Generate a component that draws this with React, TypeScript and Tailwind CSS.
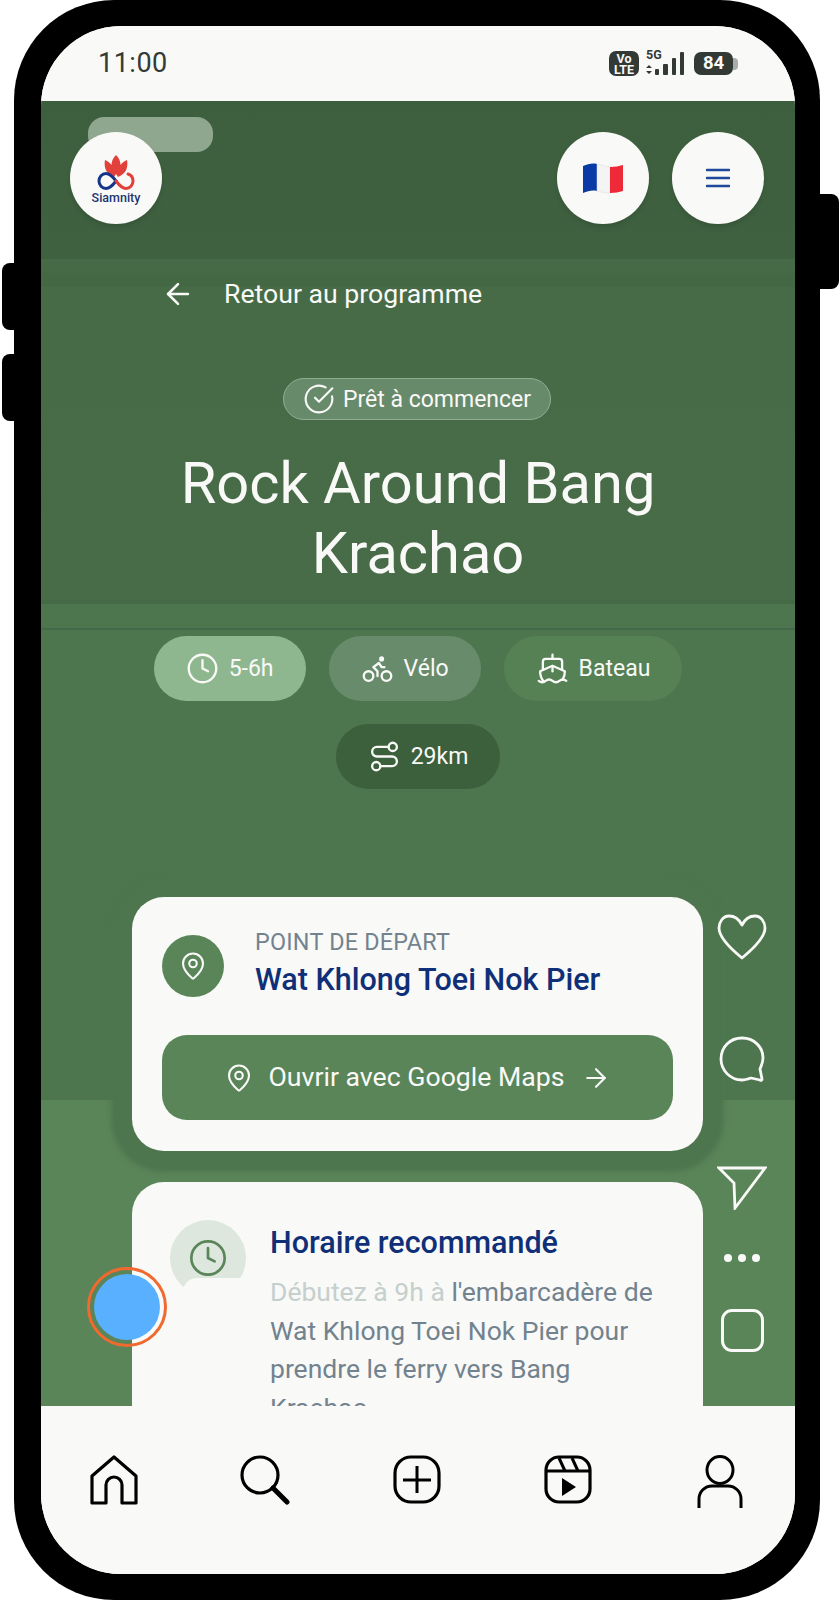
import React from 'react';
import { ArrowLeft, ArrowRight, Bike, CircleCheckBig, Clock, MapPin, Route, Ship } from 'lucide-react';

const SiamnityLogo = () => (
  <div className="flex flex-col items-center pt-[3px]">
    <svg width="38" height="36" viewBox="0 0 38 36" fill="none">
      <path d="M19 0c3 3 4.500 6 4.500 10 1.500-2 3.500-4 6.500-5 1 5 0 10-3 13-2 2-4 3-6 4l-2-3-2 3c-2-1-4-2-6-4-3-3-4-8-3-13 3 1 5 3 6.500 5C14.500 6 16 3 19 0z" fill="#e2403a" />
      <path d="M19 26c-3-4-6-7.500-10-7.500-4 0-7 3.300-7 7.500s3 7.500 7 7.500c4 0 7-3.500 10-7.500z" stroke="#15358a" strokeWidth="3" />
      <path d="M19 26c3 4 6 7.500 10 7.500 4 0 7-3.300 7-7.500 0-3-2-6-5-7" stroke="#e2403a" strokeWidth="3" strokeLinecap="round" />
    </svg>
    <span className="text-[12.500px] leading-[14px] font-medium text-[#1c3570]">Siamnity</span>
  </div>
);

const FrenchFlag = () => (
  <svg width="42" height="32" viewBox="0 0 42 32">
    <path d="M1 4c5-2 9-3 14-2v27c-5-1-9 0-14 2z" fill="#0a3aa5" />
    <path d="M15 2c4 1 8 2 13 3v26c-5 0-9-1-13-2z" fill="#f4f4f4" stroke="#dcdcdc" strokeWidth="0.5" />
    <path d="M28 5c5 0 9-1 13-2v26c-4 1-8 2-13 2z" fill="#ee2a38" />
  </svg>
);

const pills = [
  { label: '5-6h', icon: Clock, className: 'bg-[#8fb78f]' },
  { label: 'Vélo', icon: Bike, className: 'bg-[#688b6c]' },
  { label: 'Bateau', icon: Ship, className: 'bg-[#558155]' },
  { label: '29km', icon: Route, className: 'bg-[#3c5f3c]' },
];

const StatusBar = () => (
  <div className="h-[75px] shrink-0 flex items-center justify-between pl-[57px] pr-[57px] bg-[#f9f9f7] text-[#333a36]">
    <span className="text-[27px] leading-none tracking-[0.5px]">11:00</span>
    <div className="flex items-center">
      <div className="w-[30px] h-[25px] rounded-[7px] bg-[#333a36] flex flex-col items-center justify-center text-[#f9f9f7] font-bold text-[12.500px] leading-[11px]">
        <span>Vo</span>
        <span>LTE</span>
      </div>
      <div className="ml-[7px] relative w-[40px] h-[24px]">
        <span className="absolute left-0 -top-[3px] text-[12.500px] leading-[12px] font-bold">5G</span>
        <svg className="absolute left-0 top-0" width="40" height="24" viewBox="0 0 40 24" fill="#333a36">
          <path d="M0 16l3-3 3 3zM0 19h6l-3 3z" />
          <rect x="9" y="17" width="4" height="6" rx="1" />
          <rect x="17" y="12" width="5" height="11" rx="1" />
          <rect x="26" y="6" width="4" height="17" rx="1" />
          <rect x="34" y="0" width="4" height="23" rx="1" />
        </svg>
      </div>
      <div className="ml-[8px] w-[39px] h-[23px] rounded-[7px] bg-[#333a36] text-[#f9f9f7] font-bold text-[18.500px] leading-[23px] text-center">84</div>
      <div className="w-[5px] h-[12px] rounded-r-[4px] bg-[#a9adab]" />
    </div>
  </div>
);

const SideActions = () => (
  <div className="absolute left-[676px] top-[813px] w-[50px] flex flex-col items-center text-[#f9f9f7]">
    <svg width="50" height="46" viewBox="0 0 50 46" fill="none" stroke="currentColor" strokeWidth="2.8" strokeLinejoin="round">
      <path d="M25 11C22 5 17 2 12 2 6 2 2 8 2 14c0 10 12 21 23 30 11-9 23-20 23-30 0-6-4-12-10-12-5 0-10 3-13 9z" />
    </svg>
    <svg className="mt-[76px]" width="46" height="46" viewBox="0 0 46 46" fill="none" stroke="currentColor" strokeWidth="2.8" strokeLinejoin="round">
      <path d="M23 2c12 0 21 9 21 20 0 5-2 8-3 11l2 10c0 1-1 2-2 1l-9-2c-3 1-6 2-9 2C11 44 2 34 2 23 2 11 11 2 23 2z" />
    </svg>
    <svg className="mt-[84px]" width="50" height="44" viewBox="0 0 50 44" fill="none" stroke="currentColor" strokeWidth="2.8" strokeLinejoin="miter">
      <path d="M2 2h46L18 42 17 17z" />
    </svg>
    <div className="mt-[44px] flex gap-[6px]">
      <span className="w-[8px] h-[8px] rounded-full bg-[#f9f9f7]" />
      <span className="w-[8px] h-[8px] rounded-full bg-[#f9f9f7]" />
      <span className="w-[8px] h-[8px] rounded-full bg-[#f9f9f7]" />
    </div>
    <div className="mt-[47px] w-[43px] h-[43px] rounded-[11px] border-[3px] border-[#f9f9f7]" />
  </div>
);

const BottomNav = () => (
  <div className="h-[168px] shrink-0 bg-[#f9f9f7] grid grid-cols-[repeat(5,151.500px)] -ml-[3px] pt-[49px] justify-items-center items-start">
    <svg width="50" height="50" viewBox="0 0 50 50" fill="none" stroke="#000" strokeWidth="3.2" strokeLinejoin="round">
      <path d="M3 48V21L25 2l22 19v27H33V30a8 8 0 0 0-16 0v18z" />
    </svg>
    <svg width="50" height="50" viewBox="0 0 50 50" fill="none" stroke="#000" strokeWidth="3.2" strokeLinecap="round">
      <circle cx="20" cy="20" r="18" />
      <path d="M33 33l14 14" strokeWidth="5" />
    </svg>
    <svg width="50" height="50" viewBox="0 0 50 50" fill="none" stroke="#000" strokeWidth="3.2">
      <rect x="3" y="2" width="44" height="45" rx="16" />
      <path d="M25 11v27M11 25h28" strokeWidth="3" />
    </svg>
    <svg width="50" height="50" viewBox="0 0 50 50" fill="none" stroke="#000" strokeWidth="3.2">
      <rect x="3" y="2" width="44" height="45" rx="13" />
      <path d="M3 16h44" />
      <path d="M16 3l6 13M29 3l6 13" strokeWidth="3" />
      <path d="M19 23l14 9-14 9z" fill="#000" stroke="none" />
    </svg>
    <svg width="46" height="54" viewBox="0 0 46 54" fill="none" stroke="#000" strokeWidth="3">
      <ellipse cx="23" cy="15" rx="13" ry="13.500" />
      <path d="M2 53V44a13 13 0 0 1 13-13h16a13 13 0 0 1 13 13v9" />
    </svg>
  </div>
);

export default function App() {
  return (
    <div className="w-[840px] h-[1600px] bg-white relative overflow-hidden font-[family-name:Roboto,sans-serif]">
      {/* side buttons */}
      <div className="absolute left-[2px] top-[263px] w-[16px] h-[67px] bg-black rounded-l-[8px]" />
      <div className="absolute left-[2px] top-[354px] w-[16px] h-[67px] bg-black rounded-l-[8px]" />
      <div className="absolute left-[815px] top-[194px] w-[24px] h-[95px] bg-black rounded-r-[8px]" />

      <div className="relative ml-[14px] w-[806px] h-[1600px] bg-black rounded-[100px] pt-[26px] pb-[26px] pl-[27px] pr-[25px]">
        <div className="h-full rounded-[80px] overflow-hidden flex flex-col bg-[#f9f9f7]">
          <StatusBar />

          <div className="relative flex-1 min-h-0 overflow-hidden flex flex-col items-center bg-[linear-gradient(180deg,#3e5f3e_0px,#3f6140_158px,#456a45_158px,#456a45_172px,#436843_172px,#436843_186px,#466b46_186px,#476c47_499px,#456b46_499px,#456b46_503px,#4d764e_503px,#4d764e_527px,#43694a_527px,#43694a_529px,#4d764e_529px,#4d764e_999px,#5a8559_999px)] text-[#f9f9f7]">
            {/* translucent bar behind the logo */}
            <div className="absolute left-[47px] top-[16px] w-[125px] h-[35px] rounded-[16px] bg-[#8fa68f]" />

            <div className="relative shrink-0 w-full pt-[31px] pl-[29px] pr-[31px] flex items-center justify-between">
              <div className="w-[92px] h-[92px] rounded-full bg-[#f9f9f7] flex items-center justify-center shadow-md">
                <SiamnityLogo />
              </div>
              <div className="flex gap-[23px]">
                <div className="w-[92px] h-[92px] rounded-full bg-[#f9f9f7] flex items-center justify-center shadow-md">
                  <FrenchFlag />
                </div>
                <div className="w-[92px] h-[92px] rounded-full bg-[#f9f9f7] flex items-center justify-center shadow-md">
                  <svg width="24" height="20" viewBox="0 0 24 20" stroke="#1d4a9a" strokeWidth="2.6" strokeLinecap="round">
                    <path d="M1 2h22M1 10h22M1 18h22" />
                  </svg>
                </div>
              </div>
            </div>

            <div className="shrink-0 w-full mt-[53px] pl-[120px] flex items-center gap-[29px]">
              <ArrowLeft size={34} strokeWidth={1.8} />
              <span className="text-[26.670px] leading-[32px]">Retour au programme</span>
            </div>

            <div className="shrink-0 mt-[67px] -ml-[2px] h-[42px] px-[19px] flex items-center gap-[8px] rounded-full border border-[#93ad93] bg-[#678a6b]">
              <CircleCheckBig size={32} strokeWidth={1.6} />
              <span className="text-[23px] leading-none">Prêt à commencer</span>
            </div>

            <h1 className="shrink-0 mt-[28px] w-[520px] text-center text-[57.800px] leading-[70px] font-normal">Rock Around Bang Krachao</h1>

            <div className="shrink-0 mt-[48px] w-[600px] flex flex-wrap justify-center gap-[23px]">
              {pills.map(({ label, icon: Icon, className }) => (
                <div key={label} className={`h-[65px] px-[32px] rounded-full flex items-center gap-[10px] ${className}`}>
                  <Icon size={33} strokeWidth={1.7} />
                  <span className="text-[23px] leading-none">{label}</span>
                </div>
              ))}
            </div>

            <div className="mt-[108px] w-[571px] -ml-[1px] shrink-0 rounded-[32px] bg-[#f9f9f7] px-[30px] pt-[38px] pb-[31px] shadow-[0_0_5px_21px_#4d764e] relative">
              <div className="flex items-start gap-[31px]">
                <div className="w-[62px] h-[62px] shrink-0 rounded-full bg-[#5a8559] flex items-center justify-center text-[#f9f9f7]">
                  <MapPin size={30} strokeWidth={1.7} />
                </div>
                <div className="-mt-[6px]">
                  <div className="text-[23.330px] leading-[26px] tracking-[0.25px] text-[#72828e]">POINT DE DÉPART</div>
                  <div className="mt-[9px] text-[30.500px] leading-[32px] font-medium text-[#0f2f78]">Wat Khlong Toei Nok Pier</div>
                </div>
              </div>
              <div className="mt-[38px] h-[85px] rounded-[25px] bg-[#5a8559] flex items-center justify-center gap-[14px] text-[#f9f9f7]">
                <MapPin size={30} strokeWidth={1.7} />
                <span className="text-[26.670px] leading-none">Ouvrir avec Google Maps</span>
                <ArrowRight size={30} strokeWidth={1.7} className="ml-[2px]" />
              </div>
            </div>

            <div className="relative mt-[31px] w-[571px] -ml-[1px] shrink-0 rounded-t-[32px] bg-[#f9f9f7] pt-[38px] pl-[38px] pr-[30px] pb-[30px] flex gap-[24px]">
              <div className="relative w-[76px] h-[76px] shrink-0 rounded-full bg-[#dde7dd] flex items-center justify-center text-[#5a8559]">
                <Clock size={40} strokeWidth={1.6} />
                <div className="absolute left-[13px] top-[58px] w-[90px] h-[30px] rounded-tl-[14px] bg-[#f9f9f7]" />
              </div>
              <div className="relative">
                <div className="mt-[5px] text-[30.500px] leading-[36px] font-medium text-[#0f2f78]">Horaire recommandé</div>
                <p className="mt-[12px] text-[26.500px] leading-[38.500px] text-[#72828e]">
                  <span className="text-[#c5cfcd]">Débutez à 9h à </span>l'embarcadère de Wat Khlong Toei Nok Pier pour prendre le ferry vers Bang Krachao
                </p>
              </div>
            </div>

            <SideActions />

            <div className="absolute left-[46px] top-[1166px] w-[80px] h-[80px] rounded-full border-[3px] border-[#f0692f] flex items-center justify-center">
              <div className="w-[66px] h-[66px] rounded-full bg-[#58b0ff]" />
            </div>
          </div>

          <BottomNav />
        </div>
      </div>
    </div>
  );
}
